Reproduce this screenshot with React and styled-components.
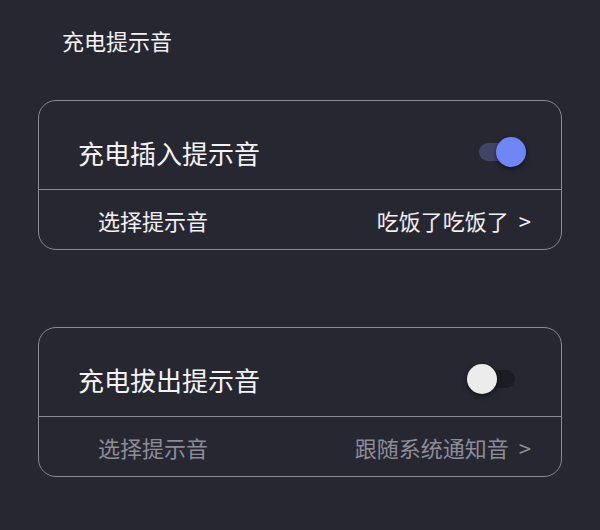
import React from "react";
import styled, { createGlobalStyle } from "styled-components";

const Global = createGlobalStyle`
  html, body { margin: 0; padding: 0; background: #272732; }
  body { font-family: "Noto Sans CJK SC", "Noto Sans", sans-serif; }
`;

const Page = styled.div`
  width: 600px;
  height: 530px;
  background: #272732;
  box-sizing: border-box;
  padding: 24px 38px 0 38px;
  display: flex;
  flex-direction: column;
`;

const Title = styled.div`
  color: #f4f4f6;
  font-size: 22px;
  line-height: 32px;
  padding-left: 24px;
  margin-bottom: 44px;
`;

const Card = styled.div`
  border: 1px solid #8a8a95;
  border-radius: 18px;
  display: flex;
  flex-direction: column;
  margin-bottom: ${(p) => p.$gap || 0}px;
`;

const MainRow = styled.div`
  height: 89px;
  box-sizing: border-box;
  padding: 14px 35px 0 39px;
  display: flex;
  align-items: center;
  justify-content: space-between;
  border-bottom: 1px solid #8a8a95;
`;

const MainLabel = styled.span`
  color: #f4f4f6;
  font-size: 26px;
`;

const SubRow = styled.div`
  height: 59px;
  box-sizing: border-box;
  padding: 0 30px 0 59px;
  display: flex;
  align-items: center;
  justify-content: space-between;
  font-size: 22px;
  color: ${(p) => (p.$dim ? "#8d8d97" : "#f1f1f4")};
`;

const Value = styled.span`
  display: flex;
  align-items: center;
  gap: 10px;
`;

const SwitchBox = styled.div`
  position: relative;
  width: 59px;
  height: 30px;
  display: flex;
  align-items: center;
  justify-content: center;
`;

const Track = styled.div`
  width: 36px;
  height: 18px;
  border-radius: 9px;
  background: ${(p) => (p.$on ? "#444467" : "#1c1c24")};
`;

const Knob = styled.div`
  position: absolute;
  top: 0;
  ${(p) => (p.$on ? "right: 0;" : "left: 0;")}
  width: 30px;
  height: 30px;
  border-radius: 50%;
  background: ${(p) => (p.$on ? "#6f86f6" : "#ececec")};
  box-shadow: 0 2px 5px rgba(0, 0, 0, 0.5);
`;

function Switch({ on }) {
  return (
    <SwitchBox>
      <Track $on={on} />
      <Knob $on={on} />
    </SwitchBox>
  );
}

function SoundCard({ label, on, value, gap }) {
  return (
    <Card $gap={gap}>
      <MainRow>
        <MainLabel>{label}</MainLabel>
        <Switch on={on} />
      </MainRow>
      <SubRow $dim={!on}>
        <span>选择提示音</span>
        <Value>
          <span>{value}</span>
          <span>&gt;</span>
        </Value>
      </SubRow>
    </Card>
  );
}

export default function App() {
  return (
    <>
      <Global />
      <Page>
        <Title>充电提示音</Title>
        <SoundCard label="充电插入提示音" on value="吃饭了吃饭了" gap={77} />
        <SoundCard label="充电拔出提示音" on={false} value="跟随系统通知音" />
      </Page>
    </>
  );
}
